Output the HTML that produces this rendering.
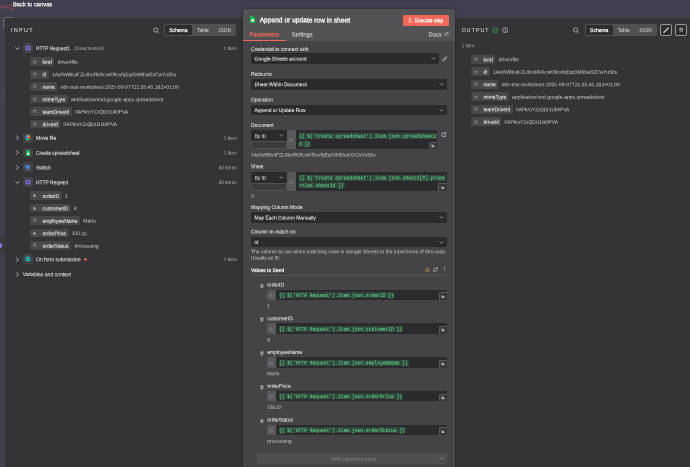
<!DOCTYPE html>
<html><head><meta charset="utf-8"><title>n8n</title>
<style>
*{box-sizing:border-box;margin:0;padding:0}
html,body{width:690px;height:467px;overflow:hidden;background:#413f4d}
body{font-family:"Liberation Sans",sans-serif;position:relative;color:#e6e6e8}
#root{position:absolute;left:0;top:0;width:690px;height:467px;will-change:transform}
.a{position:absolute;white-space:nowrap}
.t{position:absolute;left:0;top:0;white-space:pre;line-height:1;transform-origin:0 0}
.pill{position:absolute;background:#48484b;border-radius:1.5px}
.inp{position:absolute;background:#2b2b2d;border-radius:1.5px}
.mono{font-family:"Liberation Mono",monospace}
.serif{font-family:"Liberation Serif",serif}
</style></head><body><div id="root">

<svg class="a" style="left:0px;top:3px" width="15" height="8" viewBox="0 0 30 16"><g fill="none" stroke="#9c4860" stroke-width="1.400"><circle cx="2.400" cy="7.600" r="2.300"/><circle cx="11" cy="7.600" r="2.300"/><circle cx="22" cy="4.200" r="2.300"/><circle cx="25" cy="12.400" r="2.300"/><path d="M4.700 7.600h4M13.300 7.600c3.500 0 3-3.400 6.400-3.400M13.300 7.600c4 0 5 4.800 9.400 4.800"/></g></svg>
<svg class="a" style="left:6.5px;top:1.2px" width="4" height="4" viewBox="0 0 8 8"><path d="M7 4H1.500M3.800 1.500L1.300 4L3.800 6.500" fill="none" stroke="#2c2a35" stroke-width="1.300"/></svg>
<div class="t" style="font-size:5.9px;color:#f0f0f2;transform:translate(13.00px,2.27px) scaleX(0.9823) rotate(0.03deg);-webkit-text-stroke:0.25px #f0f0f2;">Back to canvas</div>
<div class="a" style="left:2.5px;top:17px;width:11px;height:11px;background:transparent;border:0.8px solid #6a6876;border-radius:1.5px"></div>
<div class="a" style="left:0px;top:237px;width:4.5px;height:17px;background:#3a393f;border-radius:0 1.500px 1.500px 0"></div>
<div class="a" style="left:-2px;top:243px;width:3.6px;height:4.5px;background:#8a76ee;border-radius:50%"></div>
<div class="a" style="left:1.5px;top:88px;width:3.5px;height:14px;background:#474553;border-radius:1px"></div>
<div class="a" style="left:5px;top:17.5px;width:240px;height:450px;background:#343436;border-radius:2.5px 0 0 0"></div>
<div class="t" style="font-size:5.8px;color:#cdcdd0;letter-spacing:1.3px;transform:translate(11.00px,28.03px) scaleX(0.9540) rotate(0.03deg);-webkit-text-stroke:0.12px #cdcdd0;">INPUT</div>
<svg class="a" style="left:152.5px;top:26.5px" width="6" height="7" viewBox="0 0 12 14"><circle cx="5.400" cy="6" r="4.200" fill="none" stroke="#dadadc" stroke-width="1.300"/><path d="M8.500 9.500L11 12.300" stroke="#dadadc" stroke-width="1.300" stroke-linecap="round"/></svg>
<div class="a" style="left:164.2px;top:24.2px;width:72.1px;height:11.6px;background:#505053;border-radius:2px"></div>
<div class="a" style="left:165.1px;top:25.1px;width:26.8px;height:9.8px;background:#2d2d2f;border-radius:1.500px"></div>
<div class="t" style="font-size:5.4px;color:#f4f4f6;transform:translate(169.30px,28.09px) scaleX(0.9187) rotate(0.03deg);-webkit-text-stroke:0.22px #f4f4f6;">Schema</div>
<div class="t" style="font-size:5.4px;color:#dededf;transform:translate(197.00px,28.09px) scaleX(0.9218) rotate(0.03deg);">Table</div>
<div class="t" style="font-size:5.4px;color:#dededf;transform:translate(218.00px,28.09px) scaleX(0.9096) rotate(0.03deg);">JSON</div>
<svg class="a" style="left:14.6px;top:45.5px" width="5" height="5" viewBox="0 0 10 10"><path d="M1.600 3.200L5 6.800L8.400 3.200" fill="none" stroke="#dcdcde" stroke-width="1.5" stroke-linecap="round" stroke-linejoin="round"/></svg>
<div class="a" style="left:23px;top:43.1px;width:9.7px;height:9.8px;background:#434346;border-radius:2px"></div>
<svg class="a" style="left:24.85px;top:45.0px" width="6" height="6" viewBox="0 0 12 12"><circle cx="6" cy="6" r="4" fill="#4b3f8f" stroke="#8b78e6" stroke-width="2.300"/></svg>
<div class="t" style="font-size:5.5px;color:#efeff1;transform:translate(36.00px,46.12px) scaleX(0.8644) rotate(0.03deg);-webkit-text-stroke:0.03px #efeff1;">HTTP Request1</div>
<div class="t" style="font-size:5.1px;color:#b4b4b8;transform:translate(223.64px,45.98px) scaleX(0.9400) rotate(0.03deg);">1 item</div>
<div class="t" style="font-size:5.2px;color:#a6a6aa;transform:translate(74.30px,46.02px) scaleX(0.9604) rotate(0.03deg);">(Deactivated)</div>
<div class="pill" style="left:30.2px;top:57.30px;width:24.10px;height:8.800px"></div>
<svg class="a" style="left:33.2px;top:59.5px" width="4.2" height="4" viewBox="0 0 8.400 8"><path d="M0.500 4.500L1.700 1.500L2.900 4.500M0.900 3.600h1.600M4.600 1.500v3h1.200a.9.900 0 0 0 0-1.500H4.600h1a.75.75 0 0 0 0-1.500z" fill="none" stroke="#a8a8ac" stroke-width="0.800"/><path d="M0.300 6.300H7.600" stroke="#a8a8ac" stroke-width="0.900"/></svg>
<div class="t" style="font-size:5.4px;color:#f0f0f2;transform:translate(42.50px,59.79px) scaleX(0.9388) rotate(0.03deg);-webkit-text-stroke:0.05px #f0f0f2;">kind</div>
<div class="t" style="font-size:5.2px;color:#cdcdd0;transform:translate(57.60px,59.72px) scaleX(0.9851) rotate(0.03deg);">drive#file</div>
<div class="pill" style="left:30.2px;top:69.75px;width:18.60px;height:8.800px"></div>
<svg class="a" style="left:33.2px;top:71.95px" width="4.2" height="4" viewBox="0 0 8.400 8"><path d="M0.500 4.500L1.700 1.500L2.900 4.500M0.900 3.600h1.600M4.600 1.500v3h1.200a.9.900 0 0 0 0-1.500H4.600h1a.75.75 0 0 0 0-1.500z" fill="none" stroke="#a8a8ac" stroke-width="0.800"/><path d="M0.300 6.300H7.600" stroke="#a8a8ac" stroke-width="0.900"/></svg>
<div class="t" style="font-size:5.4px;color:#f0f0f2;transform:translate(42.50px,72.24px) scaleX(0.9041) rotate(0.03deg);-webkit-text-stroke:0.05px #f0f0f2;">id</div>
<div class="t" style="font-size:5.2px;color:#cdcdd0;transform:translate(52.10px,72.17px) scaleX(0.9385) rotate(0.03deg);">1AxhW8kutFZL6boRkRcwKf9cvfqEqrDM9haO2CwYuSbs</div>
<div class="pill" style="left:30.2px;top:82.22px;width:27.00px;height:8.800px"></div>
<svg class="a" style="left:33.2px;top:84.42px" width="4.2" height="4" viewBox="0 0 8.400 8"><path d="M0.500 4.500L1.700 1.500L2.900 4.500M0.900 3.600h1.600M4.600 1.500v3h1.200a.9.900 0 0 0 0-1.500H4.600h1a.75.75 0 0 0 0-1.500z" fill="none" stroke="#a8a8ac" stroke-width="0.800"/><path d="M0.300 6.300H7.600" stroke="#a8a8ac" stroke-width="0.900"/></svg>
<div class="t" style="font-size:5.4px;color:#f0f0f2;transform:translate(42.50px,84.71px) scaleX(0.9031) rotate(0.03deg);-webkit-text-stroke:0.05px #f0f0f2;">name</div>
<div class="t" style="font-size:5.2px;color:#cdcdd0;transform:translate(60.50px,84.64px) scaleX(0.9702) rotate(0.03deg);">n8n-test-worksheet-2025-09-07T21:35:45.182+01:00</div>
<div class="pill" style="left:30.2px;top:94.70px;width:37.60px;height:8.800px"></div>
<svg class="a" style="left:33.2px;top:96.89999999999999px" width="4.2" height="4" viewBox="0 0 8.400 8"><path d="M0.500 4.500L1.700 1.500L2.900 4.500M0.900 3.600h1.600M4.600 1.500v3h1.200a.9.900 0 0 0 0-1.500H4.600h1a.75.75 0 0 0 0-1.500z" fill="none" stroke="#a8a8ac" stroke-width="0.800"/><path d="M0.300 6.300H7.600" stroke="#a8a8ac" stroke-width="0.900"/></svg>
<div class="t" style="font-size:5.4px;color:#f0f0f2;transform:translate(42.50px,97.19px) scaleX(0.9154) rotate(0.03deg);-webkit-text-stroke:0.05px #f0f0f2;">mimeType</div>
<div class="t" style="font-size:5.2px;color:#cdcdd0;transform:translate(71.10px,97.12px) scaleX(0.9755) rotate(0.03deg);">application/vnd.google-apps.spreadsheet</div>
<div class="pill" style="left:30.2px;top:107.18px;width:41.50px;height:8.800px"></div>
<svg class="a" style="left:33.2px;top:109.38px" width="4.2" height="4" viewBox="0 0 8.400 8"><path d="M0.500 4.500L1.700 1.500L2.900 4.500M0.900 3.600h1.600M4.600 1.500v3h1.200a.9.900 0 0 0 0-1.500H4.600h1a.75.75 0 0 0 0-1.500z" fill="none" stroke="#a8a8ac" stroke-width="0.800"/><path d="M0.300 6.300H7.600" stroke="#a8a8ac" stroke-width="0.900"/></svg>
<div class="t" style="font-size:5.4px;color:#f0f0f2;transform:translate(42.50px,109.67px) scaleX(0.9172) rotate(0.03deg);-webkit-text-stroke:0.05px #f0f0f2;">teamDriveId</div>
<div class="t" style="font-size:5.2px;color:#cdcdd0;transform:translate(75.00px,109.60px) scaleX(0.9254) rotate(0.03deg);">0APkroY2zQDr1Uk9PVA</div>
<div class="pill" style="left:30.2px;top:119.65px;width:30.10px;height:8.800px"></div>
<svg class="a" style="left:33.2px;top:121.85px" width="4.2" height="4" viewBox="0 0 8.400 8"><path d="M0.500 4.500L1.700 1.500L2.900 4.500M0.900 3.600h1.600M4.600 1.500v3h1.200a.9.900 0 0 0 0-1.500H4.600h1a.75.75 0 0 0 0-1.500z" fill="none" stroke="#a8a8ac" stroke-width="0.800"/><path d="M0.300 6.300H7.600" stroke="#a8a8ac" stroke-width="0.900"/></svg>
<div class="t" style="font-size:5.4px;color:#f0f0f2;transform:translate(42.50px,122.14px) scaleX(0.9440) rotate(0.03deg);-webkit-text-stroke:0.05px #f0f0f2;">driveId</div>
<div class="t" style="font-size:5.2px;color:#cdcdd0;transform:translate(63.60px,122.07px) scaleX(0.9254) rotate(0.03deg);">0APkroY2zQDr1Uk9PVA</div>
<svg class="a" style="left:14.6px;top:135.2px" width="5" height="5" viewBox="0 0 10 10"><path d="M3.200 1.600L6.800 5L3.200 8.400" fill="none" stroke="#dcdcde" stroke-width="1.5" stroke-linecap="round" stroke-linejoin="round"/></svg>
<div class="a" style="left:23px;top:132.79999999999998px;width:9.7px;height:9.8px;background:#434346;border-radius:2px"></div>
<svg class="a" style="left:25.1px;top:134.99999999999997px" width="5.5" height="5.5" viewBox="0 0 12 12"><path d="M6 6L6 0A6 6 0 0 0 .8 3z" fill="#3d7ff0"/><path d="M6 6L.8 3A6 6 0 0 0 .8 9z" fill="#3d7ff0"/><path d="M6 6L6 0A6 6 0 0 1 11.200 3z" fill="#f7c52e"/><path d="M6 6L11.200 3A6 6 0 0 1 11.200 9z" fill="#e8453c"/><path d="M6 6L11.200 9A6 6 0 0 1 .8 9z" fill="#2fb457"/></svg>
<div class="t" style="font-size:5.5px;color:#efeff1;transform:translate(36.00px,135.82px) scaleX(0.9224) rotate(0.03deg);-webkit-text-stroke:0.03px #efeff1;">Move file</div>
<div class="t" style="font-size:5.1px;color:#b4b4b8;transform:translate(223.64px,135.68px) scaleX(0.9400) rotate(0.03deg);">1 item</div>
<svg class="a" style="left:14.6px;top:150.1px" width="5" height="5" viewBox="0 0 10 10"><path d="M3.200 1.600L6.800 5L3.200 8.400" fill="none" stroke="#dcdcde" stroke-width="1.5" stroke-linecap="round" stroke-linejoin="round"/></svg>
<div class="a" style="left:23px;top:147.7px;width:9.7px;height:9.8px;background:#434346;border-radius:2px"></div>
<svg class="a" style="left:25.6px;top:149.6px" width="4.6" height="6" viewBox="0 0 10 13"><path d="M0 1.200C0 .5.500 0 1.200 0H6.300L10 3.700V11.800c0 .7-.5 1.200-1.200 1.200H1.200C.5 13 0 12.500 0 11.800z" fill="#1db954"/><path d="M6.300 0L10 3.700H7.200c-.5 0-.9-.4-.9-.9z" fill="#12803a"/><rect x="2.600" y="5.800" width="4.800" height="4.400" rx="0.500" fill="#e6fbe9"/></svg>
<div class="t" style="font-size:5.5px;color:#efeff1;transform:translate(36.00px,150.72px) scaleX(0.9046) rotate(0.03deg);-webkit-text-stroke:0.03px #efeff1;">Create spreadsheet</div>
<div class="t" style="font-size:5.1px;color:#b4b4b8;transform:translate(223.64px,150.58px) scaleX(0.9400) rotate(0.03deg);">1 item</div>
<svg class="a" style="left:14.6px;top:164.8px" width="5" height="5" viewBox="0 0 10 10"><path d="M3.200 1.600L6.800 5L3.200 8.400" fill="none" stroke="#dcdcde" stroke-width="1.5" stroke-linecap="round" stroke-linejoin="round"/></svg>
<div class="a" style="left:23px;top:162.4px;width:9.7px;height:9.8px;background:#434346;border-radius:2px"></div>
<svg class="a" style="left:25.3px;top:164.6px" width="5.2" height="5.6" viewBox="0 0 10 11"><rect x="0" y="0.500" width="10" height="3" rx="0.600" fill="#4f8df0"/><rect x="0" y="4.600" width="10" height="2.200" rx="0.500" fill="#4f8df0"/><path d="M2.500 7.800h5L5 10.500z" fill="#4f8df0"/></svg>
<div class="t" style="font-size:5.5px;color:#efeff1;transform:translate(36.00px,165.43px) scaleX(0.9136) rotate(0.03deg);-webkit-text-stroke:0.03px #efeff1;">Switch</div>
<div class="t" style="font-size:5.1px;color:#b4b4b8;transform:translate(218.58px,165.28px) scaleX(0.9400) rotate(0.03deg);">30 items</div>
<svg class="a" style="left:14.6px;top:179.6px" width="5" height="5" viewBox="0 0 10 10"><path d="M1.600 3.200L5 6.800L8.400 3.200" fill="none" stroke="#dcdcde" stroke-width="1.5" stroke-linecap="round" stroke-linejoin="round"/></svg>
<div class="a" style="left:23px;top:177.2px;width:9.7px;height:9.8px;background:#434346;border-radius:2px"></div>
<svg class="a" style="left:24.85px;top:179.1px" width="6" height="6" viewBox="0 0 12 12"><circle cx="6" cy="6" r="4" fill="#4b3f8f" stroke="#8b78e6" stroke-width="2.300"/></svg>
<div class="t" style="font-size:5.5px;color:#efeff1;transform:translate(36.00px,180.22px) scaleX(0.8822) rotate(0.03deg);-webkit-text-stroke:0.03px #efeff1;">HTTP Request</div>
<div class="t" style="font-size:5.1px;color:#b4b4b8;transform:translate(218.58px,180.08px) scaleX(0.9400) rotate(0.03deg);">30 items</div>
<div class="pill" style="left:30.2px;top:191.40px;width:31.40px;height:8.800px"></div>
<div class="a" style="left:33.4px;top:194.3px;width:3px;height:3px;background:#96969a;border-radius:50%"></div>
<div class="t" style="font-size:5.4px;color:#f0f0f2;transform:translate(42.50px,193.89px) scaleX(0.9219) rotate(0.03deg);-webkit-text-stroke:0.05px #f0f0f2;">orderID</div>
<div class="t" style="font-size:5.2px;color:#cdcdd0;transform:translate(64.90px,193.82px) scaleX(0.9400) rotate(0.03deg);">1</div>
<div class="pill" style="left:30.2px;top:203.70px;width:40.60px;height:8.800px"></div>
<div class="a" style="left:33.4px;top:206.6px;width:3px;height:3px;background:#96969a;border-radius:50%"></div>
<div class="t" style="font-size:5.4px;color:#f0f0f2;transform:translate(42.50px,206.19px) scaleX(0.9345) rotate(0.03deg);-webkit-text-stroke:0.05px #f0f0f2;">customerID</div>
<div class="t" style="font-size:5.2px;color:#cdcdd0;transform:translate(74.10px,206.12px) scaleX(0.9400) rotate(0.03deg);">8</div>
<div class="pill" style="left:30.2px;top:216.20px;width:49.80px;height:8.800px"></div>
<svg class="a" style="left:33.2px;top:218.4px" width="4.2" height="4" viewBox="0 0 8.400 8"><path d="M0.500 4.500L1.700 1.500L2.900 4.500M0.900 3.600h1.600M4.600 1.500v3h1.200a.9.900 0 0 0 0-1.500H4.600h1a.75.75 0 0 0 0-1.500z" fill="none" stroke="#a8a8ac" stroke-width="0.800"/><path d="M0.300 6.300H7.600" stroke="#a8a8ac" stroke-width="0.900"/></svg>
<div class="t" style="font-size:5.4px;color:#f0f0f2;transform:translate(42.50px,218.69px) scaleX(0.9254) rotate(0.03deg);-webkit-text-stroke:0.05px #f0f0f2;">employeeName</div>
<div class="t" style="font-size:5.2px;color:#cdcdd0;transform:translate(83.30px,218.62px) scaleX(0.9613) rotate(0.03deg);">Mario</div>
<div class="pill" style="left:30.2px;top:228.70px;width:38.40px;height:8.800px"></div>
<div class="a" style="left:33.4px;top:231.6px;width:3px;height:3px;background:#96969a;border-radius:50%"></div>
<div class="t" style="font-size:5.4px;color:#f0f0f2;transform:translate(42.50px,231.19px) scaleX(0.9474) rotate(0.03deg);-webkit-text-stroke:0.05px #f0f0f2;">orderPrice</div>
<div class="t" style="font-size:5.2px;color:#cdcdd0;transform:translate(71.90px,231.12px) scaleX(0.9242) rotate(0.03deg);">150.32</div>
<div class="pill" style="left:30.2px;top:241.20px;width:40.90px;height:8.800px"></div>
<svg class="a" style="left:33.2px;top:243.4px" width="4.2" height="4" viewBox="0 0 8.400 8"><path d="M0.500 4.500L1.700 1.500L2.900 4.500M0.900 3.600h1.600M4.600 1.500v3h1.200a.9.900 0 0 0 0-1.500H4.600h1a.75.75 0 0 0 0-1.500z" fill="none" stroke="#a8a8ac" stroke-width="0.800"/><path d="M0.300 6.300H7.600" stroke="#a8a8ac" stroke-width="0.900"/></svg>
<div class="t" style="font-size:5.4px;color:#f0f0f2;transform:translate(42.50px,243.69px) scaleX(0.9350) rotate(0.03deg);-webkit-text-stroke:0.05px #f0f0f2;">orderStatus</div>
<div class="t" style="font-size:5.2px;color:#cdcdd0;transform:translate(74.40px,243.62px) scaleX(0.9663) rotate(0.03deg);">processing</div>
<svg class="a" style="left:14.6px;top:256.6px" width="5" height="5" viewBox="0 0 10 10"><path d="M3.200 1.600L6.800 5L3.200 8.400" fill="none" stroke="#dcdcde" stroke-width="1.5" stroke-linecap="round" stroke-linejoin="round"/></svg>
<div class="a" style="left:23px;top:254.20000000000002px;width:9.7px;height:9.8px;background:#434346;border-radius:2px"></div>
<svg class="a" style="left:25.1px;top:256.40000000000003px" width="5.6" height="5.6" viewBox="0 0 12 12"><path d="M6 .5A5.500 5.500 0 1 0 11.500 6C11.500 3 9 .5 6 .5z" fill="#1cb8b2"/><path d="M3 7.500C4 5 6.500 4.500 9 5" stroke="#2b3a3a" stroke-width="1.600" fill="none"/></svg>
<div class="t" style="font-size:5.5px;color:#efeff1;transform:translate(36.00px,257.23px) scaleX(0.9099) rotate(0.03deg);-webkit-text-stroke:0.03px #efeff1;">On form submission</div>
<div class="t" style="font-size:5.1px;color:#b4b4b8;transform:translate(223.64px,257.09px) scaleX(0.9400) rotate(0.03deg);">1 item</div>
<svg class="a" style="left:83.3px;top:256.8px" width="4.6" height="4.8" viewBox="0 0 10 10"><path d="M5 0L6.200 3.800L10 5L6.200 6.200L5 10L3.800 6.200L0 5L3.800 3.800z" fill="#f2685a"/></svg>
<svg class="a" style="left:14.6px;top:271.5px" width="5" height="5" viewBox="0 0 10 10"><path d="M3.200 1.600L6.800 5L3.200 8.400" fill="none" stroke="#dcdcde" stroke-width="1.5" stroke-linecap="round" stroke-linejoin="round"/></svg>
<div class="t" style="font-size:5.5px;color:#efeff1;transform:translate(22.80px,272.12px) scaleX(0.9145) rotate(0.03deg);-webkit-text-stroke:0.03px #efeff1;">Variables and context</div>
<div class="a" style="left:455px;top:17.5px;width:235px;height:450px;background:#343436;"></div>
<div class="t" style="font-size:5.8px;color:#cdcdd0;letter-spacing:1.3px;transform:translate(461.70px,28.03px) scaleX(0.8817) rotate(0.03deg);-webkit-text-stroke:0.12px #cdcdd0;">OUTPUT</div>
<svg class="a" style="left:492.4px;top:26.8px" width="6.4" height="6.4" viewBox="0 0 14 14"><circle cx="7" cy="7" r="5.700" fill="none" stroke="#35b864" stroke-width="1.400"/><path d="M4.300 7.300L6.200 9.100L9.700 5.200" fill="none" stroke="#35b864" stroke-width="1.400" stroke-linecap="round" stroke-linejoin="round"/></svg>
<svg class="a" style="left:501.8px;top:26.8px" width="6.4" height="6.4" viewBox="0 0 14 14"><circle cx="7" cy="7" r="5.700" fill="none" stroke="#cfcfd1" stroke-width="1.400"/><path d="M7 6.500V10M7 4V4.300" fill="none" stroke="#cfcfd1" stroke-width="1.500" stroke-linecap="round"/></svg>
<svg class="a" style="left:573.3px;top:26.5px" width="6" height="7" viewBox="0 0 12 14"><circle cx="5.400" cy="6" r="4.200" fill="none" stroke="#dadadc" stroke-width="1.300"/><path d="M8.500 9.500L11 12.300" stroke="#dadadc" stroke-width="1.300" stroke-linecap="round"/></svg>
<div class="a" style="left:585px;top:24.2px;width:72.1px;height:11.6px;background:#505053;border-radius:2px"></div>
<div class="a" style="left:585.9px;top:25.1px;width:26.8px;height:9.8px;background:#2d2d2f;border-radius:1.500px"></div>
<div class="t" style="font-size:5.4px;color:#f4f4f6;transform:translate(590.10px,28.09px) scaleX(0.9187) rotate(0.03deg);-webkit-text-stroke:0.22px #f4f4f6;">Schema</div>
<div class="t" style="font-size:5.4px;color:#dededf;transform:translate(617.80px,28.09px) scaleX(0.9218) rotate(0.03deg);">Table</div>
<div class="t" style="font-size:5.4px;color:#dededf;transform:translate(638.80px,28.09px) scaleX(0.9096) rotate(0.03deg);">JSON</div>
<div class="a" style="left:660px;top:24px;width:12px;height:12px;background:#2c2c2e;border-radius:2px;border:0.800px solid #98989c"></div>
<div class="a" style="left:674.7px;top:24px;width:12px;height:12px;background:#2c2c2e;border-radius:2px;border:0.800px solid #98989c"></div>
<svg class="a" style="left:662.8px;top:27px" width="6.4" height="6" viewBox="0 0 12.800 12"><path d="M2 10.600L10.600 2" stroke="#bdbdc0" stroke-width="3" stroke-linecap="round"/><path d="M1.200 11.400L3.200 10.800L1.800 9.400z" fill="#bdbdc0"/></svg>
<svg class="a" style="left:678.6px;top:26.9px" width="4.6" height="5.6" viewBox="0 0 9 11"><path d="M1.200 3.600C1.500 .8 7.500 .8 7.800 3.600M1.800 5.200h5.400M1.200 6.800C1.500 9.800 7.500 9.800 7.800 6.800" fill="none" stroke="#c6c6c9" stroke-width="1.500" stroke-linecap="round"/></svg>
<div class="t" style="font-size:5.1px;color:#b4b4b8;transform:translate(461.70px,43.18px) scaleX(0.9000) rotate(0.03deg);">1 item</div>
<div class="pill" style="left:471.2px;top:54.90px;width:24.10px;height:8.800px"></div>
<svg class="a" style="left:474.2px;top:57.099999999999994px" width="4.2" height="4" viewBox="0 0 8.400 8"><path d="M0.500 4.500L1.700 1.500L2.900 4.500M0.900 3.600h1.600M4.600 1.500v3h1.200a.9.900 0 0 0 0-1.500H4.600h1a.75.75 0 0 0 0-1.500z" fill="none" stroke="#a8a8ac" stroke-width="0.800"/><path d="M0.300 6.300H7.600" stroke="#a8a8ac" stroke-width="0.900"/></svg>
<div class="t" style="font-size:5.4px;color:#f0f0f2;transform:translate(483.50px,57.39px) scaleX(0.9388) rotate(0.03deg);-webkit-text-stroke:0.05px #f0f0f2;">kind</div>
<div class="t" style="font-size:5.2px;color:#cdcdd0;transform:translate(498.60px,57.32px) scaleX(0.9851) rotate(0.03deg);">drive#file</div>
<div class="pill" style="left:471.2px;top:67.38px;width:18.60px;height:8.800px"></div>
<svg class="a" style="left:474.2px;top:69.58px" width="4.2" height="4" viewBox="0 0 8.400 8"><path d="M0.500 4.500L1.700 1.500L2.900 4.500M0.900 3.600h1.600M4.600 1.500v3h1.200a.9.900 0 0 0 0-1.500H4.600h1a.75.75 0 0 0 0-1.500z" fill="none" stroke="#a8a8ac" stroke-width="0.800"/><path d="M0.300 6.300H7.600" stroke="#a8a8ac" stroke-width="0.900"/></svg>
<div class="t" style="font-size:5.4px;color:#f0f0f2;transform:translate(483.50px,69.87px) scaleX(0.9041) rotate(0.03deg);-webkit-text-stroke:0.05px #f0f0f2;">id</div>
<div class="t" style="font-size:5.2px;color:#cdcdd0;transform:translate(493.10px,69.80px) scaleX(0.9385) rotate(0.03deg);">1AxhW8kutFZL6boRkRcwKf9cvfqEqrDM9haO2CwYuSbs</div>
<div class="pill" style="left:471.2px;top:79.85px;width:27.00px;height:8.800px"></div>
<svg class="a" style="left:474.2px;top:82.05px" width="4.2" height="4" viewBox="0 0 8.400 8"><path d="M0.500 4.500L1.700 1.500L2.900 4.500M0.900 3.600h1.600M4.600 1.500v3h1.200a.9.900 0 0 0 0-1.500H4.600h1a.75.75 0 0 0 0-1.500z" fill="none" stroke="#a8a8ac" stroke-width="0.800"/><path d="M0.300 6.300H7.600" stroke="#a8a8ac" stroke-width="0.900"/></svg>
<div class="t" style="font-size:5.4px;color:#f0f0f2;transform:translate(483.50px,82.34px) scaleX(0.9031) rotate(0.03deg);-webkit-text-stroke:0.05px #f0f0f2;">name</div>
<div class="t" style="font-size:5.2px;color:#cdcdd0;transform:translate(501.50px,82.27px) scaleX(0.9702) rotate(0.03deg);">n8n-test-worksheet-2025-09-07T21:35:45.182+01:00</div>
<div class="pill" style="left:471.2px;top:92.33px;width:37.60px;height:8.800px"></div>
<svg class="a" style="left:474.2px;top:94.53px" width="4.2" height="4" viewBox="0 0 8.400 8"><path d="M0.500 4.500L1.700 1.500L2.900 4.500M0.900 3.600h1.600M4.600 1.500v3h1.200a.9.900 0 0 0 0-1.500H4.600h1a.75.75 0 0 0 0-1.500z" fill="none" stroke="#a8a8ac" stroke-width="0.800"/><path d="M0.300 6.300H7.600" stroke="#a8a8ac" stroke-width="0.900"/></svg>
<div class="t" style="font-size:5.4px;color:#f0f0f2;transform:translate(483.50px,94.82px) scaleX(0.9154) rotate(0.03deg);-webkit-text-stroke:0.05px #f0f0f2;">mimeType</div>
<div class="t" style="font-size:5.2px;color:#cdcdd0;transform:translate(512.10px,94.75px) scaleX(0.9755) rotate(0.03deg);">application/vnd.google-apps.spreadsheet</div>
<div class="pill" style="left:471.2px;top:104.80px;width:41.50px;height:8.800px"></div>
<svg class="a" style="left:474.2px;top:107.0px" width="4.2" height="4" viewBox="0 0 8.400 8"><path d="M0.500 4.500L1.700 1.500L2.900 4.500M0.900 3.600h1.600M4.600 1.500v3h1.200a.9.900 0 0 0 0-1.500H4.600h1a.75.75 0 0 0 0-1.500z" fill="none" stroke="#a8a8ac" stroke-width="0.800"/><path d="M0.300 6.300H7.600" stroke="#a8a8ac" stroke-width="0.900"/></svg>
<div class="t" style="font-size:5.4px;color:#f0f0f2;transform:translate(483.50px,107.29px) scaleX(0.9172) rotate(0.03deg);-webkit-text-stroke:0.05px #f0f0f2;">teamDriveId</div>
<div class="t" style="font-size:5.2px;color:#cdcdd0;transform:translate(516.00px,107.22px) scaleX(0.9254) rotate(0.03deg);">0APkroY2zQDr1Uk9PVA</div>
<div class="pill" style="left:471.2px;top:117.30px;width:30.10px;height:8.800px"></div>
<svg class="a" style="left:474.2px;top:119.5px" width="4.2" height="4" viewBox="0 0 8.400 8"><path d="M0.500 4.500L1.700 1.500L2.900 4.500M0.900 3.600h1.600M4.600 1.500v3h1.200a.9.900 0 0 0 0-1.500H4.600h1a.75.75 0 0 0 0-1.500z" fill="none" stroke="#a8a8ac" stroke-width="0.800"/><path d="M0.300 6.300H7.600" stroke="#a8a8ac" stroke-width="0.900"/></svg>
<div class="t" style="font-size:5.4px;color:#f0f0f2;transform:translate(483.50px,119.79px) scaleX(0.9440) rotate(0.03deg);-webkit-text-stroke:0.05px #f0f0f2;">driveId</div>
<div class="t" style="font-size:5.2px;color:#cdcdd0;transform:translate(504.60px,119.72px) scaleX(0.9254) rotate(0.03deg);">0APkroY2zQDr1Uk9PVA</div>
<div class="a" style="left:243px;top:8.7px;width:212px;height:459px;background:#444446;border-radius:3px 3px 0 0;box-shadow:0 0 3px rgba(0,0,0,.4)"></div>
<div class="a" style="left:243px;top:8.7px;width:212px;height:32px;background:#535355;border-radius:3px 3px 0 0"></div>
<div class="a" style="left:453.4px;top:41px;width:2px;height:426px;background:#4a4a4c;"></div>
<svg class="a" style="left:250.3px;top:16.2px" width="5.3" height="6.9" viewBox="0 0 10 13"><path d="M0 1.200C0 .5.500 0 1.200 0H6.300L10 3.700V11.800c0 .7-.5 1.200-1.200 1.200H1.200C.5 13 0 12.500 0 11.800z" fill="#1db954"/><path d="M6.300 0L10 3.700H7.200c-.5 0-.9-.4-.9-.9z" fill="#12803a"/><rect x="2.600" y="5.800" width="4.800" height="4.400" rx="0.500" fill="#e6fbe9"/></svg>
<div class="t" style="font-size:7px;color:#f6f6f8;transform:translate(259.70px,16.35px) scaleX(0.9471) rotate(0.03deg);-webkit-text-stroke:0.3px #f6f6f8;">Append or update row in sheet</div>
<div class="a" style="left:402.8px;top:15px;width:46.2px;height:10.5px;background:#f4685a;border-radius:1.500px"></div>
<div class="t" style="font-size:5.4px;color:#ffffff;transform:translate(414.70px,18.29px) scaleX(0.9161) rotate(0.03deg);-webkit-text-stroke:0.22px #ffffff;">Execute step</div>
<svg class="a" style="left:408.2px;top:17.6px" width="4" height="5.4" viewBox="0 0 8 11"><path d="M2.500 .8h3M3 .8v3L.9 9.200a.7.700 0 0 0 .6 1h5a.7.700 0 0 0 .6-1L5 3.800V.8" fill="none" stroke="#fff" stroke-width="1" stroke-linejoin="round" stroke-linecap="round"/></svg>
<div class="t" style="font-size:6.1px;color:#f2685a;transform:translate(249.50px,31.53px) scaleX(0.9420) rotate(0.03deg);-webkit-text-stroke:0.24px #f2685a;">Parameters</div>
<div class="t" style="font-size:6.1px;color:#d6d6d8;transform:translate(291.70px,31.53px) scaleX(0.9573) rotate(0.03deg);-webkit-text-stroke:0.1px #d6d6d8;">Settings</div>
<div class="t" style="font-size:6.1px;color:#d6d6d8;transform:translate(428.50px,31.53px) scaleX(0.9498) rotate(0.03deg);-webkit-text-stroke:0.1px #d6d6d8;">Docs</div>
<svg class="a" style="left:444.3px;top:31.8px" width="4.6" height="4.6" viewBox="0 0 10 10"><path d="M4.200 1.800H2.300a.8.800 0 0 0-.8.800V7.700a.8.800 0 0 0 .8.800H7.400a.8.800 0 0 0 .8-.8V5.800M6 1.200H8.800V4M8.800 1.200L4.600 5.400" fill="none" stroke="#cfcfd1" stroke-width="1.100" stroke-linecap="round" stroke-linejoin="round"/></svg>
<div class="a" style="left:243px;top:39.7px;width:42.6px;height:1.3px;background:#f2685a;"></div>
<div class="t" style="font-size:5.4px;color:#efeff1;transform:translate(251.00px,47.09px) scaleX(0.9286) rotate(0.03deg);-webkit-text-stroke:0.03px #efeff1;">Credential to connect with</div>
<div class="inp" style="left:251.3px;top:53px;width:187.4px;height:10.9px"></div>
<div class="t" style="font-size:5.3px;color:#f0f0f2;transform:translate(254.60px,56.51px) scaleX(0.9437) rotate(0.03deg);-webkit-text-stroke:0.06px #f0f0f2;">Google Sheets account</div>
<svg class="a" style="left:431.1px;top:56.150000000000006px" width="4.8" height="4.8" viewBox="0 0 10 10"><path d="M1.600 3.200L5 6.800L8.400 3.200" fill="none" stroke="#bdbdc0" stroke-width="1.3" stroke-linecap="round" stroke-linejoin="round"/></svg>
<svg class="a" style="left:441.6px;top:55.6px" width="5.6" height="5.6" viewBox="0 0 12 12"><path d="M1.500 10.500L2 8L8.200 1.800a1.100 1.100 0 0 1 1.600 0l.4.400a1.100 1.100 0 0 1 0 1.600L4 10z" fill="none" stroke="#d4d4d6" stroke-width="1.500" stroke-linejoin="round"/><path d="M7 3L9 5" stroke="#d4d4d6" stroke-width="1.100"/></svg>
<div class="t" style="font-size:5.4px;color:#efeff1;transform:translate(251.00px,71.69px) scaleX(0.8957) rotate(0.03deg);-webkit-text-stroke:0.03px #efeff1;">Resource</div>
<div class="inp" style="left:251.3px;top:79px;width:195.6px;height:10.5px"></div>
<div class="t" style="font-size:5.3px;color:#f0f0f2;transform:translate(254.60px,82.31px) scaleX(0.9376) rotate(0.03deg);-webkit-text-stroke:0.06px #f0f0f2;">Sheet Within Document</div>
<svg class="a" style="left:439.29999999999995px;top:81.94999999999999px" width="4.8" height="4.8" viewBox="0 0 10 10"><path d="M1.600 3.200L5 6.800L8.400 3.200" fill="none" stroke="#bdbdc0" stroke-width="1.3" stroke-linecap="round" stroke-linejoin="round"/></svg>
<div class="t" style="font-size:5.4px;color:#efeff1;transform:translate(251.00px,97.39px) scaleX(0.9150) rotate(0.03deg);-webkit-text-stroke:0.03px #efeff1;">Operation</div>
<div class="inp" style="left:251.3px;top:104.7px;width:195.6px;height:10.5px"></div>
<div class="t" style="font-size:5.3px;color:#f0f0f2;transform:translate(254.60px,108.01px) scaleX(0.9256) rotate(0.03deg);-webkit-text-stroke:0.06px #f0f0f2;">Append or Update Row</div>
<svg class="a" style="left:439.29999999999995px;top:107.64999999999999px" width="4.8" height="4.8" viewBox="0 0 10 10"><path d="M1.600 3.200L5 6.800L8.400 3.200" fill="none" stroke="#bdbdc0" stroke-width="1.3" stroke-linecap="round" stroke-linejoin="round"/></svg>
<div class="t" style="font-size:5.4px;color:#efeff1;transform:translate(251.00px,123.09px) scaleX(0.9264) rotate(0.03deg);-webkit-text-stroke:0.03px #efeff1;">Document</div>
<div class="inp" style="left:251.3px;top:130.3px;width:35.400px;height:10.700px;border-radius:1.500px 1.500px 0 0"></div>
<div class="a" style="left:251.3px;top:141.20000000000002px;width:35.4px;height:8px;background:#3b3b3d;border-radius:0 0 1.500px 1.500px;border:0.700px solid #525255"></div>
<div class="t" style="font-size:5.2px;color:#ededef;transform:translate(254.70px,133.82px) scaleX(0.9046) rotate(0.03deg);">By ID</div>
<svg class="a" style="left:278.6px;top:133.4px" width="4.8" height="4.8" viewBox="0 0 10 10"><path d="M1.600 3.200L5 6.800L8.400 3.200" fill="none" stroke="#bdbdc0" stroke-width="1.3" stroke-linecap="round" stroke-linejoin="round"/></svg>
<div class="a" style="left:287.2px;top:130.3px;width:8.4px;height:18.9px;background:#59595c;border-radius:1.500px 0 0 1.500px"></div>
<div class="t serif" style="font-size:5px;color:#97979b;transform:translate(289.30px,137.80px) scaleX(1.0324) rotate(0.03deg);font-style:italic;"><i>fx</i></div>
<div class="inp" style="left:295.5px;top:130.3px;width:141.7px;height:18.9px;border-radius:0 1.500px 1.500px 0"></div>
<div class="a" style="left:298.60px;top:132.80px;width:138.29px;height:5.800px;background:#30463a;border-radius:0.800px;transform:rotate(0.02deg)"></div>
<div class="t mono" style="font-size:5.4px;color:#5ed28c;transform:translate(298.90px,134.69px) scaleX(0.8672) rotate(0.03deg);-webkit-text-stroke:0.09px #5ed28c;">{{ $('Create spreadsheet').item.json.spreadsheetI</div>
<div class="a" style="left:298.60px;top:140.70px;width:11.84px;height:5.800px;background:#30463a;border-radius:0.800px;transform:rotate(0.02deg)"></div>
<div class="t mono" style="font-size:5.4px;color:#5ed28c;transform:translate(298.90px,142.59px) scaleX(0.8672) rotate(0.03deg);-webkit-text-stroke:0.09px #5ed28c;">d }}</div>
<div class="a" style="left:428.7px;top:141.50000000000003px;width:8.5px;height:7.7px;background:#38383a;border-radius:1.500px 0 1.500px 0;border-top:0.600px solid #59595c;border-left:0.600px solid #59595c"></div>
<svg class="a" style="left:431.3px;top:143.80000000000004px" width="4" height="3.8" viewBox="0 0 8 7.600"><path d="M1 1.500h2.200l.8.900H7v4.200H1z" fill="#adadb1"/><path d="M1 1.500h2.500" stroke="#adadb1" stroke-width="1.400"/></svg>
<svg class="a" style="left:440.8px;top:132.2px" width="5.4" height="5.4" viewBox="0 0 10 10"><path d="M4.200 1.800H2.300a.8.800 0 0 0-.8.800V7.700a.8.800 0 0 0 .8.800H7.400a.8.800 0 0 0 .8-.8V5.800M6 1.200H8.800V4M8.800 1.200L4.600 5.400" fill="none" stroke="#cfcfd1" stroke-width="1.100" stroke-linecap="round" stroke-linejoin="round"/></svg>
<div class="t" style="font-size:5.1px;color:#cbcbce;transform:translate(251.00px,152.38px) scaleX(0.9592) rotate(0.03deg);">1AxhW8kutFZL6boRkRcwKf9cvfqEqrDM9haO2CwYuSbs</div>
<div class="t" style="font-size:5.4px;color:#efeff1;transform:translate(251.00px,164.29px) scaleX(0.8787) rotate(0.03deg);-webkit-text-stroke:0.03px #efeff1;">Sheet</div>
<div class="inp" style="left:251.3px;top:172px;width:35.400px;height:10.700px;border-radius:1.500px 1.500px 0 0"></div>
<div class="a" style="left:251.3px;top:182.9px;width:35.4px;height:8px;background:#3b3b3d;border-radius:0 0 1.500px 1.500px;border:0.700px solid #525255"></div>
<div class="t" style="font-size:5.2px;color:#ededef;transform:translate(254.70px,175.52px) scaleX(0.9046) rotate(0.03deg);">By ID</div>
<svg class="a" style="left:278.6px;top:175.1px" width="4.8" height="4.8" viewBox="0 0 10 10"><path d="M1.600 3.200L5 6.800L8.400 3.200" fill="none" stroke="#bdbdc0" stroke-width="1.3" stroke-linecap="round" stroke-linejoin="round"/></svg>
<div class="a" style="left:287.2px;top:172px;width:8.4px;height:18.9px;background:#59595c;border-radius:1.500px 0 0 1.500px"></div>
<div class="t serif" style="font-size:5px;color:#97979b;transform:translate(289.30px,179.50px) scaleX(1.0324) rotate(0.03deg);font-style:italic;"><i>fx</i></div>
<div class="inp" style="left:295.5px;top:172px;width:151.2px;height:18.9px;border-radius:0 1.500px 1.500px 0"></div>
<div class="a" style="left:298.60px;top:174.50px;width:146.72px;height:5.800px;background:#30463a;border-radius:0.800px;transform:rotate(0.02deg)"></div>
<div class="t mono" style="font-size:5.4px;color:#5ed28c;transform:translate(298.90px,176.39px) scaleX(0.8672) rotate(0.03deg);-webkit-text-stroke:0.09px #5ed28c;">{{ $('Create spreadsheet').item.json.sheets[0].prope</div>
<div class="a" style="left:298.60px;top:182.30px;width:45.56px;height:5.800px;background:#30463a;border-radius:0.800px;transform:rotate(0.02deg)"></div>
<div class="t mono" style="font-size:5.4px;color:#5ed28c;transform:translate(298.90px,184.19px) scaleX(0.8672) rotate(0.03deg);-webkit-text-stroke:0.09px #5ed28c;">rties.sheetId }}</div>
<div class="a" style="left:438.2px;top:183.20000000000002px;width:8.5px;height:7.7px;background:#38383a;border-radius:1.500px 0 1.500px 0;border-top:0.600px solid #59595c;border-left:0.600px solid #59595c"></div>
<svg class="a" style="left:440.8px;top:185.50000000000003px" width="4" height="3.8" viewBox="0 0 8 7.600"><path d="M1 1.500h2.200l.8.900H7v4.200H1z" fill="#adadb1"/><path d="M1 1.500h2.500" stroke="#adadb1" stroke-width="1.400"/></svg>
<div class="t" style="font-size:5.1px;color:#cbcbce;transform:translate(251.30px,193.78px) scaleX(0.9400) rotate(0.03deg);">0</div>
<div class="t" style="font-size:5.4px;color:#efeff1;transform:translate(251.00px,205.09px) scaleX(0.9224) rotate(0.03deg);-webkit-text-stroke:0.03px #efeff1;">Mapping Column Mode</div>
<div class="inp" style="left:251.3px;top:212.2px;width:195.6px;height:10.5px"></div>
<div class="t" style="font-size:5.3px;color:#f0f0f2;transform:translate(254.60px,215.50px) scaleX(0.9248) rotate(0.03deg);-webkit-text-stroke:0.06px #f0f0f2;">Map Each Column Manually</div>
<svg class="a" style="left:439.29999999999995px;top:215.14999999999998px" width="4.8" height="4.8" viewBox="0 0 10 10"><path d="M1.600 3.200L5 6.800L8.400 3.200" fill="none" stroke="#bdbdc0" stroke-width="1.3" stroke-linecap="round" stroke-linejoin="round"/></svg>
<div class="t" style="font-size:5.4px;color:#efeff1;transform:translate(251.00px,229.39px) scaleX(0.9209) rotate(0.03deg);-webkit-text-stroke:0.03px #efeff1;">Column to match on</div>
<div class="inp" style="left:251.3px;top:236.8px;width:195.6px;height:10.4px"></div>
<div class="t" style="font-size:5.3px;color:#f0f0f2;transform:translate(254.60px,240.05px) scaleX(0.8727) rotate(0.03deg);-webkit-text-stroke:0.06px #f0f0f2;">id</div>
<svg class="a" style="left:439.29999999999995px;top:239.7px" width="4.8" height="4.8" viewBox="0 0 10 10"><path d="M1.600 3.200L5 6.800L8.400 3.200" fill="none" stroke="#bdbdc0" stroke-width="1.3" stroke-linecap="round" stroke-linejoin="round"/></svg>
<div class="t" style="font-size:5.1px;color:#cbcbce;transform:translate(251.00px,249.19px) scaleX(0.9807) rotate(0.03deg);">The column to use when matching rows in Google Sheets to the input items of this node.</div>
<div class="t" style="font-size:5.1px;color:#cbcbce;transform:translate(251.00px,255.59px) scaleX(0.9387) rotate(0.03deg);">Usually an ID.</div>
<div class="t" style="font-size:5.4px;color:#f2f2f4;transform:translate(251.00px,267.99px) scaleX(0.9164) rotate(0.03deg);-webkit-text-stroke:0.2px #f2f2f4;">Values to Send</div>
<div class="a" style="left:251px;top:274.5px;width:196px;height:0.8px;background:#545457;"></div>
<svg class="a" style="left:425.2px;top:267.4px" width="5" height="4.8" viewBox="0 0 11 10"><path d="M5.500 1.200L9.800 8.800H1.200z" fill="none" stroke="#e9a23b" stroke-width="1.400" stroke-linejoin="round"/></svg>
<svg class="a" style="left:433.3px;top:267.3px" width="5" height="5" viewBox="0 0 10 10"><path d="M1.500 4.200A3.600 3.600 0 0 1 8.200 3.200M8.500 5.800A3.600 3.600 0 0 1 1.800 6.800" fill="none" stroke="#c4c4c7" stroke-width="1.200" stroke-linecap="round"/><path d="M8.600 1v2.400H6.200M1.400 9V6.600h2.400" fill="none" stroke="#c4c4c7" stroke-width="1.200" stroke-linecap="round" stroke-linejoin="round"/></svg>
<div class="a" style="left:444px;top:266.6px;width:1px;height:1px;background:#b8b8bb;border-radius:50%"></div>
<div class="a" style="left:444px;top:268.40000000000003px;width:1px;height:1px;background:#b8b8bb;border-radius:50%"></div>
<div class="a" style="left:444px;top:270.20000000000005px;width:1px;height:1px;background:#b8b8bb;border-radius:50%"></div>
<div class="t" style="font-size:5.4px;color:#efeff1;transform:translate(267.20px,282.39px) scaleX(0.9441) rotate(0.03deg);-webkit-text-stroke:0.03px #efeff1;">orderID</div>
<svg class="a" style="left:260.2px;top:283.5px" width="3.8" height="4.9" viewBox="0 0 8 10"><path d="M.8 2.400h6.400M2.700 2.400V1.200h2.600V2.400M1.500 2.400l.4 6.400h4.200l.4-6.400M3.300 4.300v3M4.700 4.300v3" fill="none" stroke="#b8b8bc" stroke-width="1.150" stroke-linecap="round" stroke-linejoin="round"/></svg>
<div class="a" style="left:267.2px;top:289.7px;width:8.4px;height:10.4px;background:#59595c;border-radius:1.500px 0 0 1.500px"></div>
<div class="t serif" style="font-size:5px;color:#97979b;transform:translate(269.30px,292.95px) scaleX(1.0324) rotate(0.03deg);font-style:italic;"><i>fx</i></div>
<div class="inp" style="left:275.5px;top:289.7px;width:171.5px;height:10.4px;border-radius:0 1.500px 1.500px 0"></div>
<div class="a" style="left:278.60px;top:292.10px;width:115.81px;height:5.800px;background:#30463a;border-radius:0.800px;transform:rotate(0.02deg)"></div>
<div class="t mono" style="font-size:5.4px;color:#5ed28c;transform:translate(278.90px,293.99px) scaleX(0.8672) rotate(0.03deg);-webkit-text-stroke:0.09px #5ed28c;">{{ $('HTTP Request').item.json.orderID }}</div>
<div class="a" style="left:438.5px;top:292.4px;width:8.5px;height:7.7px;background:#38383a;border-radius:1.500px 0 1.500px 0;border-top:0.600px solid #59595c;border-left:0.600px solid #59595c"></div>
<svg class="a" style="left:441.1px;top:294.7px" width="4" height="3.8" viewBox="0 0 8 7.600"><path d="M1 1.500h2.200l.8.900H7v4.200H1z" fill="#adadb1"/><path d="M1 1.500h2.500" stroke="#adadb1" stroke-width="1.400"/></svg>
<div class="t" style="font-size:5.1px;color:#cbcbce;transform:translate(267.30px,303.69px) scaleX(0.9400) rotate(0.03deg);">1</div>
<div class="t" style="font-size:5.4px;color:#efeff1;transform:translate(267.20px,316.14px) scaleX(0.9345) rotate(0.03deg);-webkit-text-stroke:0.03px #efeff1;">customerID</div>
<svg class="a" style="left:260.2px;top:317.25px" width="3.8" height="4.9" viewBox="0 0 8 10"><path d="M.8 2.400h6.400M2.700 2.400V1.200h2.600V2.400M1.500 2.400l.4 6.400h4.200l.4-6.400M3.300 4.300v3M4.700 4.300v3" fill="none" stroke="#b8b8bc" stroke-width="1.150" stroke-linecap="round" stroke-linejoin="round"/></svg>
<div class="a" style="left:267.2px;top:323.45px;width:8.4px;height:10.4px;background:#59595c;border-radius:1.500px 0 0 1.500px"></div>
<div class="t serif" style="font-size:5px;color:#97979b;transform:translate(269.30px,326.70px) scaleX(1.0324) rotate(0.03deg);font-style:italic;"><i>fx</i></div>
<div class="inp" style="left:275.5px;top:323.45px;width:171.5px;height:10.4px;border-radius:0 1.500px 1.500px 0"></div>
<div class="a" style="left:278.60px;top:325.85px;width:124.24px;height:5.800px;background:#30463a;border-radius:0.800px;transform:rotate(0.02deg)"></div>
<div class="t mono" style="font-size:5.4px;color:#5ed28c;transform:translate(278.90px,327.74px) scaleX(0.8672) rotate(0.03deg);-webkit-text-stroke:0.09px #5ed28c;">{{ $('HTTP Request').item.json.customerID }}</div>
<div class="a" style="left:438.5px;top:326.15px;width:8.5px;height:7.7px;background:#38383a;border-radius:1.500px 0 1.500px 0;border-top:0.600px solid #59595c;border-left:0.600px solid #59595c"></div>
<svg class="a" style="left:441.1px;top:328.45px" width="4" height="3.8" viewBox="0 0 8 7.600"><path d="M1 1.500h2.200l.8.900H7v4.200H1z" fill="#adadb1"/><path d="M1 1.500h2.500" stroke="#adadb1" stroke-width="1.400"/></svg>
<div class="t" style="font-size:5.1px;color:#cbcbce;transform:translate(267.30px,337.44px) scaleX(0.9400) rotate(0.03deg);">8</div>
<div class="t" style="font-size:5.4px;color:#efeff1;transform:translate(267.20px,349.89px) scaleX(0.9307) rotate(0.03deg);-webkit-text-stroke:0.03px #efeff1;">employeeName</div>
<svg class="a" style="left:260.2px;top:351.0px" width="3.8" height="4.9" viewBox="0 0 8 10"><path d="M.8 2.400h6.400M2.700 2.400V1.200h2.600V2.400M1.500 2.400l.4 6.400h4.200l.4-6.400M3.300 4.300v3M4.700 4.300v3" fill="none" stroke="#b8b8bc" stroke-width="1.150" stroke-linecap="round" stroke-linejoin="round"/></svg>
<div class="a" style="left:267.2px;top:357.2px;width:8.4px;height:10.4px;background:#59595c;border-radius:1.500px 0 0 1.500px"></div>
<div class="t serif" style="font-size:5px;color:#97979b;transform:translate(269.30px,360.45px) scaleX(1.0324) rotate(0.03deg);font-style:italic;"><i>fx</i></div>
<div class="inp" style="left:275.5px;top:357.2px;width:171.5px;height:10.4px;border-radius:0 1.500px 1.500px 0"></div>
<div class="a" style="left:278.60px;top:359.60px;width:129.86px;height:5.800px;background:#30463a;border-radius:0.800px;transform:rotate(0.02deg)"></div>
<div class="t mono" style="font-size:5.4px;color:#5ed28c;transform:translate(278.90px,361.49px) scaleX(0.8672) rotate(0.03deg);-webkit-text-stroke:0.09px #5ed28c;">{{ $('HTTP Request').item.json.employeeName }}</div>
<div class="a" style="left:438.5px;top:359.9px;width:8.5px;height:7.7px;background:#38383a;border-radius:1.500px 0 1.500px 0;border-top:0.600px solid #59595c;border-left:0.600px solid #59595c"></div>
<svg class="a" style="left:441.1px;top:362.2px" width="4" height="3.8" viewBox="0 0 8 7.600"><path d="M1 1.500h2.200l.8.900H7v4.200H1z" fill="#adadb1"/><path d="M1 1.500h2.500" stroke="#adadb1" stroke-width="1.400"/></svg>
<div class="t" style="font-size:5.1px;color:#cbcbce;transform:translate(267.30px,371.19px) scaleX(0.9566) rotate(0.03deg);">Mario</div>
<div class="t" style="font-size:5.4px;color:#efeff1;transform:translate(267.20px,383.64px) scaleX(0.9474) rotate(0.03deg);-webkit-text-stroke:0.03px #efeff1;">orderPrice</div>
<svg class="a" style="left:260.2px;top:384.75px" width="3.8" height="4.9" viewBox="0 0 8 10"><path d="M.8 2.400h6.400M2.700 2.400V1.200h2.600V2.400M1.500 2.400l.4 6.400h4.200l.4-6.400M3.300 4.300v3M4.700 4.300v3" fill="none" stroke="#b8b8bc" stroke-width="1.150" stroke-linecap="round" stroke-linejoin="round"/></svg>
<div class="a" style="left:267.2px;top:390.95px;width:8.4px;height:10.4px;background:#59595c;border-radius:1.500px 0 0 1.500px"></div>
<div class="t serif" style="font-size:5px;color:#97979b;transform:translate(269.30px,394.20px) scaleX(1.0324) rotate(0.03deg);font-style:italic;"><i>fx</i></div>
<div class="inp" style="left:275.5px;top:390.95px;width:171.5px;height:10.4px;border-radius:0 1.500px 1.500px 0"></div>
<div class="a" style="left:278.60px;top:393.35px;width:124.24px;height:5.800px;background:#30463a;border-radius:0.800px;transform:rotate(0.02deg)"></div>
<div class="t mono" style="font-size:5.4px;color:#5ed28c;transform:translate(278.90px,395.24px) scaleX(0.8672) rotate(0.03deg);-webkit-text-stroke:0.09px #5ed28c;">{{ $('HTTP Request').item.json.orderPrice }}</div>
<div class="a" style="left:438.5px;top:393.65px;width:8.5px;height:7.7px;background:#38383a;border-radius:1.500px 0 1.500px 0;border-top:0.600px solid #59595c;border-left:0.600px solid #59595c"></div>
<svg class="a" style="left:441.1px;top:395.95px" width="4" height="3.8" viewBox="0 0 8 7.600"><path d="M1 1.500h2.200l.8.900H7v4.200H1z" fill="#adadb1"/><path d="M1 1.500h2.500" stroke="#adadb1" stroke-width="1.400"/></svg>
<div class="t" style="font-size:5.1px;color:#cbcbce;transform:translate(267.30px,404.94px) scaleX(0.9103) rotate(0.03deg);">150.32</div>
<div class="t" style="font-size:5.4px;color:#efeff1;transform:translate(267.20px,417.39px) scaleX(0.9242) rotate(0.03deg);-webkit-text-stroke:0.03px #efeff1;">orderStatus</div>
<svg class="a" style="left:260.2px;top:418.5px" width="3.8" height="4.9" viewBox="0 0 8 10"><path d="M.8 2.400h6.400M2.700 2.400V1.200h2.600V2.400M1.500 2.400l.4 6.400h4.200l.4-6.400M3.300 4.300v3M4.700 4.300v3" fill="none" stroke="#b8b8bc" stroke-width="1.150" stroke-linecap="round" stroke-linejoin="round"/></svg>
<div class="a" style="left:267.2px;top:424.7px;width:8.4px;height:10.4px;background:#59595c;border-radius:1.500px 0 0 1.500px"></div>
<div class="t serif" style="font-size:5px;color:#97979b;transform:translate(269.30px,427.95px) scaleX(1.0324) rotate(0.03deg);font-style:italic;"><i>fx</i></div>
<div class="inp" style="left:275.5px;top:424.7px;width:171.5px;height:10.4px;border-radius:0 1.500px 1.500px 0"></div>
<div class="a" style="left:278.60px;top:427.10px;width:127.05px;height:5.800px;background:#30463a;border-radius:0.800px;transform:rotate(0.02deg)"></div>
<div class="t mono" style="font-size:5.4px;color:#5ed28c;transform:translate(278.90px,428.99px) scaleX(0.8672) rotate(0.03deg);-webkit-text-stroke:0.09px #5ed28c;">{{ $('HTTP Request').item.json.orderStatus }}</div>
<div class="a" style="left:438.5px;top:427.4px;width:8.5px;height:7.7px;background:#38383a;border-radius:1.500px 0 1.500px 0;border-top:0.600px solid #59595c;border-left:0.600px solid #59595c"></div>
<svg class="a" style="left:441.1px;top:429.7px" width="4" height="3.8" viewBox="0 0 8 7.600"><path d="M1 1.500h2.200l.8.900H7v4.200H1z" fill="#adadb1"/><path d="M1 1.500h2.500" stroke="#adadb1" stroke-width="1.400"/></svg>
<div class="t" style="font-size:5.1px;color:#cbcbce;transform:translate(267.30px,438.69px) scaleX(0.9893) rotate(0.03deg);">processing</div>
<div class="a" style="left:257.2px;top:453.2px;width:189.8px;height:11.1px;background:#4f4f52;border-radius:1.500px"></div>
<div class="t" style="font-size:5.2px;color:#8c8c90;transform:translate(331.70px,456.62px) scaleX(0.9595) rotate(0.03deg);">Add column to send</div>
<svg class="a" style="left:438.7px;top:456.3px" width="5" height="5" viewBox="0 0 10 10"><path d="M1.600 3.200L5 6.800L8.400 3.200" fill="none" stroke="#a2a2a6" stroke-width="1.3" stroke-linecap="round" stroke-linejoin="round"/></svg>
</div></body></html>
